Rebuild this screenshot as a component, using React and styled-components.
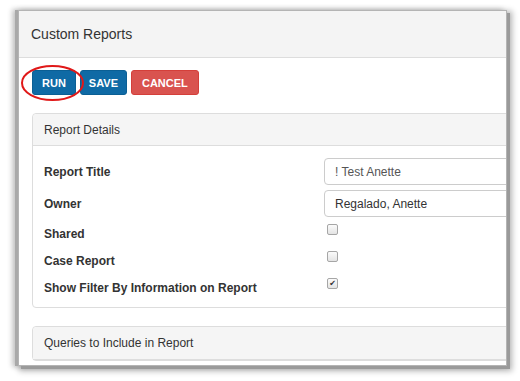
import React from 'react';
import styled, { createGlobalStyle } from 'styled-components';

const Global = createGlobalStyle`
  html, body { margin: 0; padding: 0; background: #fff; }
  body { font-family: "Liberation Sans", Arial, sans-serif; color: #333; }
`;

const Stage = styled.div`
  width: 520px;
  height: 381px;
  padding: 11px 0 0 19px;
  box-sizing: border-box;
  overflow: hidden;
`;

const Window = styled.div`
  position: relative;
  width: 487px;
  height: 354px;
  background: #fff;
  overflow: hidden;
  box-shadow:
    0 0 0 1px #b4b4b4,
    -3px 0 0 1px #a9a9a9,
    3px 3px 0 1px #9a9a9a,
    -5px 0 5px 2px rgba(0, 0, 0, 0.22),
    3px 3px 6px 3px rgba(0, 0, 0, 0.3);
`;

const TitleBar = styled.div`
  height: 46px;
  display: flex;
  align-items: center;
  padding-left: 12px;
  background: #f4f4f4;
  border-bottom: 1px solid #ddd;
  font-size: 14px;
  color: #333;
`;

const Content = styled.div`
  padding: 12px 0 0 13px;
`;

const Toolbar = styled.div`
  display: flex;
  gap: 4px;
`;

const Button = styled.button`
  height: 25px;
  padding: 0 ${p => p.$pad}px;
  border: 1px solid ${p => (p.$variant === 'danger' ? '#d43f3a' : '#0b5f94')};
  border-radius: 3px;
  background: ${p => (p.$variant === 'danger' ? '#d9534f' : '#0f6aa5')};
  color: #fff;
  font-family: "Liberation Sans", Arial, sans-serif;
  font-size: 11px;
  font-weight: bold;
  cursor: pointer;
`;

const Panel = styled.section`
  width: 600px;
  margin-top: 18px;
  border: 1px solid #ddd;
  border-radius: 4px;
  background: #fff;
`;

const PanelHeading = styled.div`
  height: ${p => (p.$tall ? 32 : 31)}px;
  display: flex;
  align-items: center;
  padding-left: 11px;
  background: #f5f5f5;
  border-bottom: 1px solid #ddd;
  border-radius: 4px 4px 0 0;
  font-size: 12px;
  color: #333;
`;

const PanelBody = styled.div`
  padding: 12px 11px 6px;
`;

const Field = styled.div`
  display: grid;
  grid-template-columns: 280px 1fr;
  height: 27px;
  align-items: center;
  margin-bottom: ${p => p.$after || 0}px;
`;

const Label = styled.label`
  font-size: 12px;
  font-weight: bold;
  color: #333;
`;

const TextBox = styled.div`
  height: 27px;
  box-sizing: border-box;
  display: flex;
  align-items: center;
  padding: 0 10px;
  border: 1px solid #ccc;
  border-radius: 4px;
  font-size: 12px;
  color: ${p => (p.$muted ? '#555' : '#333')};
  background: #fff;
`;

const CheckCell = styled.div`
  align-self: start;
  margin: 4px 0 0 3px;
`;

const Check = styled.span`
  display: flex;
  align-items: center;
  justify-content: center;
  width: 9px;
  height: 9px;
  border: 1px solid #a6a6a6;
  border-radius: 2px;
  background: linear-gradient(#fbfbfb, #e4e4e4);
  font-size: 8px;
  line-height: 1;
  color: #333;
  font-family: "DejaVu Sans", sans-serif;
`;

const Annotation = styled.svg`
  position: absolute;
  left: 1px;
  top: 53px;
  pointer-events: none;
`;

const checkRows = [
  { label: 'Shared', checked: false },
  { label: 'Case Report', checked: false },
  { label: 'Show Filter By Information on Report', checked: true },
];

export default function App() {
  return (
    <>
      <Global />
      <Stage>
        <Window>
          <TitleBar>Custom Reports</TitleBar>
          <Content>
            <Toolbar>
              <Button $pad={9}>RUN</Button>
              <Button $pad={8}>SAVE</Button>
              <Button $pad={10} $variant="danger">CANCEL</Button>
            </Toolbar>
            <Panel>
              <PanelHeading>Report Details</PanelHeading>
              <PanelBody>
                <Field $after={5}>
                  <Label>Report Title</Label>
                  <TextBox $muted>! Test Anette</TextBox>
                </Field>
                <Field $after={3}>
                  <Label>Owner</Label>
                  <TextBox>Regalado, Anette</TextBox>
                </Field>
                {checkRows.map(r => (
                  <Field key={r.label}>
                    <Label>{r.label}</Label>
                    <CheckCell>
                      <Check>{r.checked ? '✔' : ''}</Check>
                    </CheckCell>
                  </Field>
                ))}
              </PanelBody>
            </Panel>
            <Panel>
              <PanelHeading $tall>Queries to Include in Report</PanelHeading>
            </Panel>
          </Content>
          <Annotation width="66" height="38" viewBox="0 0 66 38">
            <ellipse cx="32.5" cy="19" rx="30.5" ry="17" fill="none" stroke="#e01818" strokeWidth="2" />
          </Annotation>
        </Window>
      </Stage>
    </>
  );
}
